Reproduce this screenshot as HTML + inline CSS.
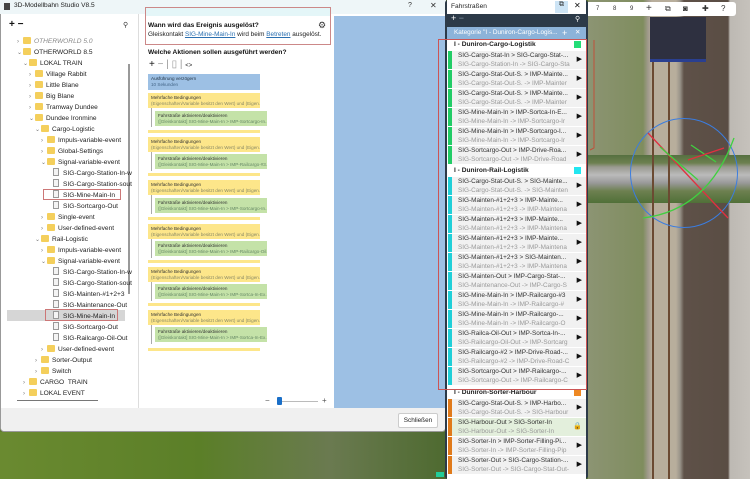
<!DOCTYPE html>
<html><head><meta charset="utf-8"><style>
*{margin:0;padding:0;box-sizing:border-box}
body{width:750px;height:479px;overflow:hidden;position:relative;font-family:"Liberation Sans",sans-serif;background:#5e7a2c}
.a{position:absolute}
.t{font-size:6.6px;color:#222;white-space:nowrap;line-height:11px;height:11px}
.fo{display:inline-block;width:8px;height:7px;background:#f4cf5c;vertical-align:-1px;margin-right:3px;border-radius:1px}
.fi{display:inline-block;width:6px;height:8px;background:#f4f4f4;border:1px solid #999;vertical-align:-1px;margin-right:4px}
.ch{display:inline-block;width:6px;color:#777;font-size:6px}
.y,.g{left:148px;width:112px;height:15px;font-size:4.6px;padding:2px 3px;color:#333;line-height:5.5px;white-space:nowrap;overflow:hidden}
.y{background:#fde68a}
.g{background:#c4e2a8;left:155px}
.yf{background:#fde68a;left:148px;width:112px;height:3px}
.vl{left:151px;width:1px;background:#aaa}
.r{left:448px;width:138px;height:18px;background:#f1f1f1;font-size:6.4px;line-height:8.5px;padding:1px 0 0 10px;color:#333;white-space:nowrap;overflow:hidden}
.r i{font-style:normal;color:#999;display:block}
.r b{position:absolute;left:0;top:0;width:4px;height:18px}
.r s{position:absolute;right:4px;top:5px;text-decoration:none;font-size:7px;color:#111}
.gh{left:448px;width:138px;height:11px;background:#fff;font-size:6.6px;font-weight:bold;padding:2px 0 0 6px;color:#222}
.gh b{position:absolute;right:5px;top:2px;width:7px;height:7px}
</style></head><body>
<!-- 3D view -->
<div class="a" style="left:588px;top:0;width:162px;height:479px;background:linear-gradient(90deg,#8c9473 0,#7f8d5e 55px,#a09a8c 60px,#b8ae9c 64px,#b8ae9c 88px,#9a948a 92px,#5e5148 96px,#5a4d44 140px,#bdb9b3 142px,#c6c2bc 162px)"></div>
<div class="a" style="left:588px;top:155px;width:162px;height:48px;background:linear-gradient(#567040,#6d8050 8px,#9a9a90 12px,#bbb 20px,#999 28px,#6d8050 36px,#507038)"></div>
<div class="a" style="left:652px;top:60px;width:2px;height:419px;background:#6b4a32"></div>
<div class="a" style="left:668px;top:60px;width:2px;height:419px;background:#6b4a32"></div>
<div class="a" style="left:650px;top:17px;width:56px;height:45px;background:#2e3040;border-bottom:3px solid #2a3f90"></div>
<div class="a" style="left:630px;top:118px;width:108px;height:110px;border:1px solid #3b7de0;border-radius:50%"></div>
<svg class="a" style="left:588px;top:0" width="162" height="479"><path d="M60 133 L140 218" stroke="#e03040" stroke-width="1.3"/><path d="M72 147 L110 180 M103 145 L128 162" stroke="#40d040" stroke-width="1.3" fill="none"/><path d="M55 218 Q120 210 146 138" stroke="#40d040" stroke-width="1.3" fill="none"/><path d="M100 160 L136 148" stroke="#e03040" stroke-width="1.3"/><path d="M6 40 L6 148 L2 150" stroke="#c0503a" stroke-width="1" fill="none"/></svg>
<div class="a" style="left:588px;top:2px;width:148px;height:14px;background:#fff;border-radius:0 3px 3px 0;font-size:6px;color:#333;line-height:14px">
<span class="a" style="left:8px">7</span><span class="a" style="left:25px">8</span><span class="a" style="left:42px">9</span><span class="a" style="left:58px;font-size:10px">+</span><span class="a" style="left:77px;font-size:8px">⧉</span><span class="a" style="left:95px;font-size:8px">◙</span><span class="a" style="left:114px;font-size:8px">✚</span><span class="a" style="left:133px;font-size:8px">?</span></div>

<!-- left dialog -->
<div class="a" style="left:0;top:0;width:446px;height:432px;background:#fff;border:1px solid #999;border-radius:0 0 4px 4px"></div>
<div class="a" style="left:0;top:0;width:446px;height:14px;background:#eef6f8"></div>
<div class="a" style="left:4px;top:3px;width:6px;height:7px;background:#444"></div>
<div class="a" style="left:14px;top:2px;font-size:6.6px;color:#222">3D-Modellbahn Studio V8.5</div>
<div class="a" style="left:408px;top:2px;font-size:7px;color:#333">?</div>
<div class="a" style="left:430px;top:1px;font-size:8px;color:#333">✕</div>
<div class="a" style="left:9px;top:19px;font-size:10px;font-weight:bold;color:#111">+ −</div>
<div class="a" style="left:123px;top:21px;font-size:7px;color:#333">⚲</div>
<div class="a" style="left:128px;top:64px;width:2px;height:230px;background:#999"></div>
<div class="a" style="left:17px;top:400px;width:81px;height:1px;background:#777"></div>
<div class="a" style="left:7px;top:310px;width:118px;height:11px;background:#d6d6d6"></div>
<div class="a" style="left:43px;top:189px;width:78px;height:11px;border:1px solid #c77"></div>
<div class="a" style="left:45px;top:309px;width:73px;height:12px;border:1px solid #c77"></div>
<div class="a" style="left:0;top:36px;width:140px">
<div class="t" style="padding-left:17px"><span class="ch">›</span><span class="fo"></span><i style="color:#888">OTHERWORLD 5.0</i></div>
<div class="t" style="padding-left:17px"><span class="ch">⌄</span><span class="fo"></span>OTHERWORLD 8.5</div>
<div class="t" style="padding-left:23px"><span class="ch">⌄</span><span class="fo"></span>LOKAL TRAIN</div>
<div class="t" style="padding-left:29px"><span class="ch">›</span><span class="fo"></span>Village Rabbit</div>
<div class="t" style="padding-left:29px"><span class="ch">›</span><span class="fo"></span>Little Blane</div>
<div class="t" style="padding-left:29px"><span class="ch">›</span><span class="fo"></span>Big Blane</div>
<div class="t" style="padding-left:29px"><span class="ch">›</span><span class="fo"></span>Tramway Dundee</div>
<div class="t" style="padding-left:29px"><span class="ch">⌄</span><span class="fo"></span>Dundee Ironmine</div>
<div class="t" style="padding-left:35px"><span class="ch">⌄</span><span class="fo"></span>Cargo-Logistic</div>
<div class="t" style="padding-left:41px"><span class="ch">›</span><span class="fo"></span>Impuls-variable-event</div>
<div class="t" style="padding-left:41px"><span class="ch">›</span><span class="fo"></span>Global-Settings</div>
<div class="t" style="padding-left:41px"><span class="ch">⌄</span><span class="fo"></span>Signal-variable-event</div>
<div class="t" style="padding-left:53px"><span class="fi"></span>SIG-Cargo-Station-In-w</div>
<div class="t" style="padding-left:53px"><span class="fi"></span>SIG-Cargo-Station-sout</div>
<div class="t" style="padding-left:53px"><span class="fi"></span>SIG-Mine-Main-In</div>
<div class="t" style="padding-left:53px"><span class="fi"></span>SIG-Sortcargo-Out</div>
<div class="t" style="padding-left:41px"><span class="ch">›</span><span class="fo"></span>Single-event</div>
<div class="t" style="padding-left:41px"><span class="ch">›</span><span class="fo"></span>User-defined-event</div>
<div class="t" style="padding-left:35px"><span class="ch">⌄</span><span class="fo"></span>Rail-Logistic</div>
<div class="t" style="padding-left:41px"><span class="ch">›</span><span class="fo"></span>Impuls-variable-event</div>
<div class="t" style="padding-left:41px"><span class="ch">⌄</span><span class="fo"></span>Signal-variable-event</div>
<div class="t" style="padding-left:53px"><span class="fi"></span>SIG-Cargo-Station-In-w</div>
<div class="t" style="padding-left:53px"><span class="fi"></span>SIG-Cargo-Station-sout</div>
<div class="t" style="padding-left:53px"><span class="fi"></span>SIG-Mainten-#1+2+3</div>
<div class="t" style="padding-left:53px"><span class="fi"></span>SIG-Maintenance-Out</div>
<div class="t" style="padding-left:53px"><span class="fi"></span>SIG-Mine-Main-In</div>
<div class="t" style="padding-left:53px"><span class="fi"></span>SIG-Sortcargo-Out</div>
<div class="t" style="padding-left:53px"><span class="fi"></span>SIG-Railcargo-Oil-Out</div>
<div class="t" style="padding-left:41px"><span class="ch">›</span><span class="fo"></span>User-defined-event</div>
<div class="t" style="padding-left:35px"><span class="ch">›</span><span class="fo"></span>Sorter-Output</div>
<div class="t" style="padding-left:35px"><span class="ch">›</span><span class="fo"></span>Switch</div>
<div class="t" style="padding-left:23px"><span class="ch">›</span><span class="fo"></span>CARGO &nbsp;TRAIN</div>
<div class="t" style="padding-left:23px"><span class="ch">›</span><span class="fo"></span>LOKAL EVENT</div>
</div>
<div class="a" style="left:138px;top:14px;width:1px;height:395px;background:#ddd"></div>

<!-- middle -->
<div class="a" style="left:145px;top:7px;width:186px;height:38px;border:1px solid #c88;background:#fff"></div>
<div class="a" style="left:146px;top:8px;width:184px;height:8px;background:#e4f6f8"></div>
<div class="a" style="left:148px;top:22px;font-size:6.6px;font-weight:bold;color:#111">Wann wird das Ereignis ausgelöst?</div>
<div class="a" style="left:148px;top:31px;font-size:6.4px;color:#222">Gleiskontakt <u style="color:#2a6fb0">SIG-Mine-Main-In</u> wird beim <u style="color:#2a6fb0">Betreten</u> ausgelöst.</div>
<div class="a" style="left:318px;top:20px;font-size:9px;color:#333">⚙</div>
<div class="a" style="left:148px;top:49px;font-size:6.6px;font-weight:bold;color:#111">Welche Aktionen sollen ausgeführt werden?</div>
<div class="a" style="left:149px;top:59px;font-size:10px;color:#111">+ <span style="color:#999">− | ▯ |</span> <span style="font-size:6px;color:#222">&lt;&gt;</span></div>
<div class="a" style="left:148px;top:74px;width:112px;height:16px;background:#9dc0e4;font-size:4.6px;padding:2px 3px;color:#234;line-height:5.5px;white-space:nowrap">Ausführung verzögern<br><span style="color:#468">10 Sekunden</span></div>
<div class="a y" style="top:93px">Mehrfache Bedingungen<br><span style="color:#886">(Eigenschaften/Variable besitzt den Wert) und (Eigen...</span></div>
<div class="a vl" style="top:108px;height:19px"></div>
<div class="a g" style="top:111px">Fahrstraße aktivieren/deaktivieren<br><span style="color:#686">([Gleiskontakt] SIG-Mine-Main-In &gt; IMP-Sortcargo-In...</span></div>
<div class="a yf" style="top:130px"></div>
<div class="a y" style="top:137px">Mehrfache Bedingungen<br><span style="color:#886">(Eigenschaften/Variable besitzt den Wert) und (Eigen...</span></div>
<div class="a vl" style="top:152px;height:19px"></div>
<div class="a g" style="top:154px">Fahrstraße aktivieren/deaktivieren<br><span style="color:#686">([Gleiskontakt] SIG-Mine-Main-In &gt; IMP-Railcargo-#3...</span></div>
<div class="a yf" style="top:173px"></div>
<div class="a y" style="top:180px">Mehrfache Bedingungen<br><span style="color:#886">(Eigenschaften/Variable besitzt den Wert) und (Eigen...</span></div>
<div class="a vl" style="top:195px;height:19px"></div>
<div class="a g" style="top:198px">Fahrstraße aktivieren/deaktivieren<br><span style="color:#686">([Gleiskontakt] SIG-Mine-Main-In &gt; IMP-Sortcargo-In...</span></div>
<div class="a yf" style="top:217px"></div>
<div class="a y" style="top:224px">Mehrfache Bedingungen<br><span style="color:#886">(Eigenschaften/Variable besitzt den Wert) und (Eigen...</span></div>
<div class="a vl" style="top:239px;height:19px"></div>
<div class="a g" style="top:241px">Fahrstraße aktivieren/deaktivieren<br><span style="color:#686">([Gleiskontakt] SIG-Mine-Main-In &gt; IMP-Railcargo-Oil...</span></div>
<div class="a yf" style="top:260px"></div>
<div class="a y" style="top:267px">Mehrfache Bedingungen<br><span style="color:#886">(Eigenschaften/Variable besitzt den Wert) und (Eigen...</span></div>
<div class="a vl" style="top:282px;height:19px"></div>
<div class="a g" style="top:284px">Fahrstraße aktivieren/deaktivieren<br><span style="color:#686">([Gleiskontakt] SIG-Mine-Main-In &gt; IMP-Sortca-In-Ex...</span></div>
<div class="a yf" style="top:303px"></div>
<div class="a y" style="top:310px">Mehrfache Bedingungen<br><span style="color:#886">(Eigenschaften/Variable besitzt den Wert) und (Eigen...</span></div>
<div class="a vl" style="top:325px;height:19px"></div>
<div class="a g" style="top:327px">Fahrstraße aktivieren/deaktivieren<br><span style="color:#686">([Gleiskontakt] SIG-Mine-Main-In &gt; IMP-Sortca-In-Ex...</span></div>
<div class="a yf" style="top:348px"></div>
<div class="a" style="left:265px;top:396px;font-size:8px;color:#555">−</div>
<div class="a" style="left:282px;top:401px;width:36px;height:1px;background:#bbb"></div>
<div class="a" style="left:277px;top:397px;width:5px;height:8px;background:#1a6fc8;border-radius:1px"></div>
<div class="a" style="left:322px;top:396px;font-size:8px;color:#555">+</div>
<div class="a" style="left:334px;top:16px;width:111px;height:392px;background:#9dc0e4"></div>
<div class="a" style="left:1px;top:408px;width:444px;height:23px;background:#f0f0f0;border-radius:0 0 4px 4px"></div>
<div class="a" style="left:398px;top:413px;width:40px;height:15px;background:#fff;border:1px solid #ccc;border-radius:2px;font-size:6.4px;text-align:center;line-height:13px;color:#222">Schließen</div>
<div class="a" style="left:0;top:432px;width:446px;height:47px;background:linear-gradient(90deg,#6a8a30,#5b7f28 200px,#6a7a50 330px,#4e6a30)"></div>
<div class="a" style="left:436px;top:472px;width:8px;height:5px;background:#2c9;"></div>

<!-- Fahrstraßen panel -->
<div class="a" style="left:445px;top:0;width:143px;height:479px;background:#2c3a48;border-radius:3px"></div>
<div class="a" style="left:447px;top:39px;width:139px;height:440px;background:#fff"></div>
<div class="a" style="left:447px;top:0;width:139px;height:14px;background:#fff"></div>
<div class="a" style="left:451px;top:3px;font-size:6.6px;color:#222">Fahrstraßen</div>
<div class="a" style="left:555px;top:1px;width:13px;height:12px;background:#cde4f5;font-size:7px;text-align:center;color:#333">⧉</div>
<div class="a" style="left:574px;top:1px;font-size:8px;color:#111">✕</div>
<div class="a" style="left:451px;top:13px;font-size:9px;color:#fff">+ <span style="color:#8899aa">−</span></div>
<div class="a" style="left:575px;top:15px;font-size:7px;color:#fff">⚲</div>
<div class="a" style="left:447px;top:27px;width:139px;height:12px;background:#8cb3d9;font-size:6.4px;color:#fff;line-height:12px;padding-left:7px;white-space:nowrap">Kategorie "I - Duniron-Cargo-Logis...<span class="a" style="left:115px;font-size:9px">+</span><span class="a" style="left:128px">✕</span></div>
<div class="a gh" style="top:39px">I - Duniron-Cargo-Logistik<b style="background:#22dd77"></b></div>
<div class="a r" style="top:51px"><b style="background:#22cc66"></b>SIG-Cargo-Stat-In &gt; SIG-Cargo-Stat-...<i>SIG-Cargo-Station-In -&gt; SIG-Cargo-Sta</i><s>▶</s></div>
<div class="a r" style="top:70px"><b style="background:#22cc66"></b>SIG-Cargo-Stat-Out-S. &gt; IMP-Mainte...<i>SIG-Cargo-Stat-Out-S. -&gt; IMP-Mainter</i><s>▶</s></div>
<div class="a r" style="top:89px"><b style="background:#22cc66"></b>SIG-Cargo-Stat-Out-S. &gt; IMP-Mainte...<i>SIG-Cargo-Stat-Out-S. -&gt; IMP-Mainter</i><s>▶</s></div>
<div class="a r" style="top:108px"><b style="background:#22cc66"></b>SIG-Mine-Main-In &gt; IMP-Sortca-In-E...<i>SIG-Mine-Main-In -&gt; IMP-Sortcargo-Ir</i><s>▶</s></div>
<div class="a r" style="top:127px"><b style="background:#22cc66"></b>SIG-Mine-Main-In &gt; IMP-Sortcargo-I...<i>SIG-Mine-Main-In -&gt; IMP-Sortcargo-Ir</i><s>▶</s></div>
<div class="a r" style="top:146px"><b style="background:#22cc66"></b>SIG-Sortcargo-Out &gt; IMP-Drive-Roa...<i>SIG-Sortcargo-Out -&gt; IMP-Drive-Road</i><s>▶</s></div>
<div class="a gh" style="top:165px">I - Duniron-Rail-Logistik<b style="background:#22e6f0"></b></div>
<div class="a r" style="top:177px"><b style="background:#20cfd8"></b>SIG-Cargo-Stat-Out-S. &gt; SIG-Mainte...<i>SIG-Cargo-Stat-Out-S. -&gt; SIG-Mainten</i><s>▶</s></div>
<div class="a r" style="top:196px"><b style="background:#20cfd8"></b>SIG-Mainten-#1+2+3 &gt; IMP-Mainte...<i>SIG-Mainten-#1+2+3 -&gt; IMP-Maintena</i><s>▶</s></div>
<div class="a r" style="top:215px"><b style="background:#20cfd8"></b>SIG-Mainten-#1+2+3 &gt; IMP-Mainte...<i>SIG-Mainten-#1+2+3 -&gt; IMP-Maintena</i><s>▶</s></div>
<div class="a r" style="top:234px"><b style="background:#20cfd8"></b>SIG-Mainten-#1+2+3 &gt; IMP-Mainte...<i>SIG-Mainten-#1+2+3 -&gt; IMP-Maintena</i><s>▶</s></div>
<div class="a r" style="top:253px"><b style="background:#20cfd8"></b>SIG-Mainten-#1+2+3 &gt; SIG-Mainten...<i>SIG-Mainten-#1+2+3 -&gt; IMP-Maintena</i><s>▶</s></div>
<div class="a r" style="top:272px"><b style="background:#20cfd8"></b>SIG-Mainten-Out &gt; IMP-Cargo-Stat-...<i>SIG-Maintenance-Out -&gt; IMP-Cargo-S</i><s>▶</s></div>
<div class="a r" style="top:291px"><b style="background:#20cfd8"></b>SIG-Mine-Main-In &gt; IMP-Railcargo-#3<i>SIG-Mine-Main-In -&gt; IMP-Railcargo-#</i><s>▶</s></div>
<div class="a r" style="top:310px"><b style="background:#20cfd8"></b>SIG-Mine-Main-In &gt; IMP-Railcargo-...<i>SIG-Mine-Main-In -&gt; IMP-Railcargo-O</i><s>▶</s></div>
<div class="a r" style="top:329px"><b style="background:#20cfd8"></b>SIG-Railca-Oil-Out &gt; IMP-Sortca-In-...<i>SIG-Railcargo-Oil-Out -&gt; IMP-Sortcarg</i><s>▶</s></div>
<div class="a r" style="top:348px"><b style="background:#20cfd8"></b>SIG-Railcargo-#2 &gt; IMP-Drive-Road-...<i>SIG-Railcargo-#2 -&gt; IMP-Drive-Road-C</i><s>▶</s></div>
<div class="a r" style="top:367px"><b style="background:#20cfd8"></b>SIG-Sortcargo-Out &gt; IMP-Railcargo-...<i>SIG-Sortcargo-Out -&gt; IMP-Railcargo-C</i><s>▶</s></div>
<div class="a gh" style="top:387px">I - Duniron-Sorter-Harbour<b style="background:#ee8822"></b></div>
<div class="a r" style="top:399px"><b style="background:#e07a1a"></b>SIG-Cargo-Stat-Out-S. &gt; IMP-Harbo...<i>SIG-Cargo-Stat-Out-S. -&gt; SIG-Harbour</i><s>▶</s></div>
<div class="a r" style="top:418px;background:#e3efdc"><b style="background:#e07a1a"></b>SIG-Harbour-Out &gt; SIG-Sorter-In<i>SIG-Harbour-Out -&gt; SIG-Sorter-In</i><s>🔒</s></div>
<div class="a r" style="top:437px"><b style="background:#e07a1a"></b>SIG-Sorter-In &gt; IMP-Sorter-Filling-Pi...<i>SIG-Sorter-In -&gt; IMP-Sorter-Filling-Pip</i><s>▶</s></div>
<div class="a r" style="top:456px"><b style="background:#e07a1a"></b>SIG-Sorter-Out &gt; SIG-Cargo-Station-...<i>SIG-Sorter-Out -&gt; SIG-Cargo-Stat-Out-</i><s>▶</s></div>
<div class="a" style="left:438px;top:39px;width:149px;height:351px;border:1px solid #c55"></div>
</body></html>
